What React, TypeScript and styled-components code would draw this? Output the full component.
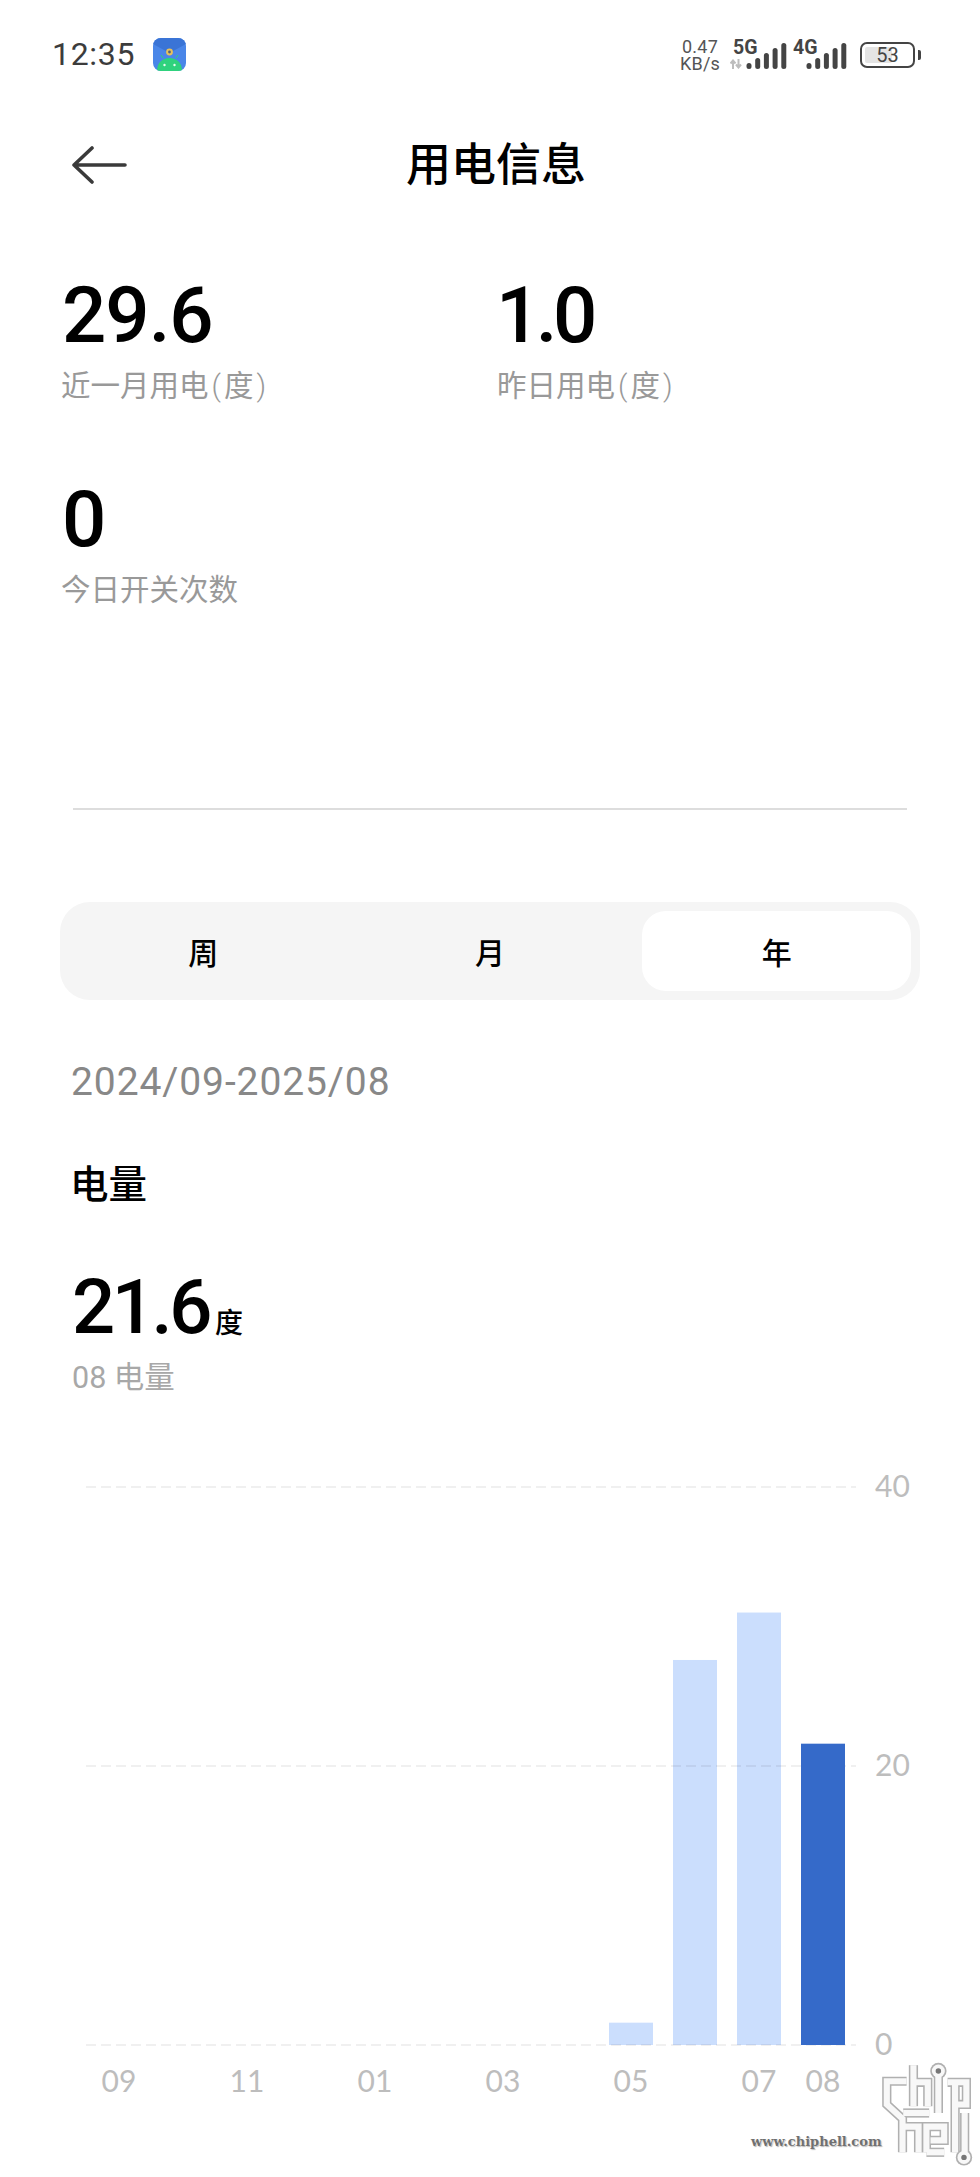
import styled, { createGlobalStyle } from 'styled-components'

const SANS = `Roboto, "Noto Sans CJK SC", sans-serif`

const chart = {
  top: 1450, // page y of the svg, the plot below uses page coordinates
  zero: 2045,
  unit: 13.95,
  firstX: 119,
  step: 64,
  barW: 44,
}

// one value per month, 09 to 08
const usage = [0, 0, 0, 0, 0, 0, 0, 0, 1.6, 27.6, 31, 21.6]
const months = ['09', '', '11', '', '01', '', '03', '', '05', '', '07', '08']
const ticks = [0, 20, 40]

const signalBars = [6, 11, 16, 21, 26]

function App() {
  return (
    <Page>
      <GlobalStyle />
      <StatusBar>
        <Clock>12:35</Clock>
        <AppIcon />
        <StatusRight>
          <NetSpeed>
            <span>0.47</span>
            <span>KB/s</span>
          </NetSpeed>
          <Signal label="5G" activity />
          <Signal label="4G" />
          <Battery />
        </StatusRight>
      </StatusBar>

      <TitleBar>
        <BackArrow />
        <Title>用电信息</Title>
      </TitleBar>

      <Stats>
        <Stat>
          <StatValue>29.6</StatValue>
          <StatLabel>近一月用电<Paren>(</Paren>度<Paren>)</Paren></StatLabel>
        </Stat>
        <Stat>
          <StatValue $tight>1.0</StatValue>
          <StatLabel>昨日用电<Paren>(</Paren>度<Paren>)</Paren></StatLabel>
        </Stat>
        <Stat>
          <StatValue>0</StatValue>
          <StatLabel>今日开关次数</StatLabel>
        </Stat>
      </Stats>

      <Divider />

      <Segments>
        <Segment>周</Segment>
        <Segment>月</Segment>
        <Segment $active>年</Segment>
      </Segments>

      <Range>2024/09-2025/08</Range>
      <SectionTitle>电量</SectionTitle>
      <Total>
        <TotalValue>21.6</TotalValue>
        <TotalUnit>度</TotalUnit>
      </Total>
      <TotalLabel>08 电量</TotalLabel>

      <UsageChart />

      <Watermark>
        <WatermarkUrl>www.chiphell.com</WatermarkUrl>
        <ChipHellLogo />
      </Watermark>
    </Page>
  )
}

export default App

// ------------------ DRAWINGS ------------------

function AppIcon() {
  return (
    <IconSvg viewBox="0 0 33 33">
      <defs>
        <clipPath id="icon-clip">
          <rect width="33" height="33" rx="8" />
        </clipPath>
      </defs>
      <g clipPath="url(#icon-clip)">
        <rect width="33" height="33" fill="#4a86e8" />
        <path d="M0 0H33V6L16.5 15L0 6Z" fill="#3a74d6" />
        <path d="M4 33C4 25 9 20 16.5 20S29 25 29 33Z" fill="#2fd27d" />
        <path d="M10 20L8 17M23 20L25 17" stroke="#2fd27d" strokeWidth="1" />
        <circle cx="16.5" cy="14" r="3.4" fill="#e8c25a" />
        <circle cx="16.5" cy="14" r="1.4" fill="#55617a" />
        <circle cx="11.5" cy="27" r="1.2" fill="#e9fbf1" />
        <circle cx="21.5" cy="27" r="1.2" fill="#e9fbf1" />
      </g>
    </IconSvg>
  )
}

function Signal({ label, activity }: { label: string; activity?: boolean }) {
  return (
    <SignalBox>
      <SignalName>{label}</SignalName>
      {activity && (
        <ActivitySvg viewBox="0 0 12 10">
          <path d="M3 10V2M0.5 4.5L3 1.5L5.5 4.5" stroke="#bdbdbd" strokeWidth="2" fill="none" />
          <path d="M8.5 0V8M6 5.5L8.5 8.5L11 5.5" stroke="#bdbdbd" strokeWidth="2" fill="none" />
        </ActivitySvg>
      )}
      <BarsSvg viewBox="0 0 41 26">
        {signalBars.map((h, i) => (
          <line
            key={h}
            x1={3 + i * 8.7}
            x2={3 + i * 8.7}
            y1={23.5}
            y2={26 - h + 2.5}
            stroke="#444"
            strokeWidth="5"
            strokeLinecap="round"
          />
        ))}
      </BarsSvg>
    </SignalBox>
  )
}

function Battery() {
  return (
    <BatteryBox>
      <BatteryBody>
        <BatteryFill />
        <BatteryText>53</BatteryText>
      </BatteryBody>
      <BatteryNub />
    </BatteryBox>
  )
}

function BackArrow() {
  return (
    <ArrowSvg viewBox="0 0 56 38">
      <path
        d="M54 19H3M21 2L3 19L21 36"
        stroke="#3a3a3a"
        strokeWidth="3.6"
        strokeLinecap="round"
        strokeLinejoin="round"
        fill="none"
      />
    </ArrowSvg>
  )
}

function UsageChart() {
  const yOf = (v: number) => chart.zero - v * chart.unit
  const xOf = (i: number) => chart.firstX + i * chart.step
  const lastIndex = usage.length - 1

  const bar = (v: number, i: number) => (
    <rect
      key={i}
      x={xOf(i) - chart.barW / 2}
      y={yOf(v)}
      width={chart.barW}
      height={v * chart.unit}
      fill={i === lastIndex ? '#356ac9' : '#cbdefd'}
    />
  )

  return (
    <ChartSvg viewBox={`0 ${chart.top} 980 660`}>
      {usage.map((v, i) => (i === lastIndex ? null : bar(v, i)))}
      {ticks.map((t) => (
        <g key={t}>
          <line
            x1="86"
            x2="856"
            y1={yOf(t)}
            y2={yOf(t)}
            stroke="#000"
            strokeOpacity="0.06"
            strokeWidth="2"
            strokeDasharray="10 5"
          />
          <ChartText x="875" y={yOf(t) + 10}>{t}</ChartText>
        </g>
      ))}
      {bar(usage[lastIndex], lastIndex)}
      {months.map((m, i) =>
        m ? (
          <ChartText key={m} x={xOf(i)} y="2092" textAnchor="middle">
            {m}
          </ChartText>
        ) : null,
      )}
    </ChartSvg>
  )
}

// circuit-board style logo, drawn twice: a grey outline and a white core
const logoStrokes = [
  'M490 122H432V190L478 232V330',
  'M478 255H525V330',
  'M510 75V195',
  'M510 125H552V195',
  'M480 215H556',
  'M583 106V215',
  'M610 125H665V190H632',
  'M632 125V330',
  'M548 330V255H600V295H560',
  'M548 330H600',
  'M660 215V330',
]
const logoDots: [number, number, number][] = [
  [583, 92, 14],
  [658, 345, 14],
]

function ChipHellLogo() {
  return (
    <LogoSvg viewBox="415 60 287 310">
      <g fill="none" strokeLinejoin="miter">
        {logoStrokes.map((d) => (
          <path key={d} d={d} stroke="#b0b0b0" strokeWidth="27" />
        ))}
        {logoDots.map(([x, y, r]) => (
          <circle key={x} cx={x} cy={y} r={r + 10} fill="#b0b0b0" />
        ))}
        {logoStrokes.map((d) => (
          <path key={d} d={d} stroke="#f8f8f8" strokeWidth="18" />
        ))}
        {logoDots.map(([x, y, r]) => (
          <g key={x}>
            <circle cx={x} cy={y} r={r + 5} fill="#f8f8f8" />
            <circle cx={x} cy={y} r={r - 6} fill="#777" />
          </g>
        ))}
      </g>
    </LogoSvg>
  )
}

// ------------------ STYLING ------------------

const GlobalStyle = createGlobalStyle`
  html, body {
    margin: 0;
    padding: 0;
    background: #fff;
  }
`

const Page = styled.div`
  position: relative;
  width: 980px;
  height: 2177px;
  overflow: hidden;
  background: #fff;
  font-family: ${SANS};
  color: #000;
`

const StatusBar = styled.div`
  display: flex;
  align-items: center;
  height: 33px;
  padding: 38px 59px 0 52px;
`

const Clock = styled.div`
  width: 83px;
  font-size: 32px;
  line-height: 33px;
  letter-spacing: 0.7px;
  color: #3c3c3c;
`

const IconSvg = styled.svg`
  width: 33px;
  height: 33px;
  margin-left: 18px;
`

const StatusRight = styled.div`
  display: flex;
  align-items: center;
  margin-left: auto;
  color: #444;
`

const NetSpeed = styled.div`
  display: flex;
  flex-direction: column;
  align-items: center;
  width: 38px;
  font-size: 18px;
  line-height: 17px;
  letter-spacing: 0.2px;
  color: #555;
`

const SignalBox = styled.div`
  position: relative;
  width: 54px;
  height: 30px;
  margin-left: 14px;

  & + & {
    margin-left: 6px;
  }
`

const SignalName = styled.div`
  position: absolute;
  left: 0;
  top: -1px;
  font-size: 19.5px;
  line-height: 17px;
  font-weight: 700;
  color: #444;
`

const ActivitySvg = styled.svg`
  position: absolute;
  left: -3px;
  top: 19px;
  width: 12px;
  height: 10px;
`

const BarsSvg = styled.svg`
  position: absolute;
  left: 13px;
  top: 3px;
  width: 41px;
  height: 26px;
`

const BatteryBox = styled.div`
  display: flex;
  align-items: center;
  margin-left: 13px;
`

const BatteryBody = styled.div`
  position: relative;
  display: flex;
  align-items: center;
  justify-content: center;
  box-sizing: border-box;
  width: 55px;
  height: 26px;
  border: 2.5px solid #444;
  border-radius: 7px;
`

const BatteryFill = styled.div`
  position: absolute;
  left: 3px;
  top: 3px;
  bottom: 3px;
  width: 53%;
  border-radius: 2px;
  background: #e4e4e4;
`

const BatteryText = styled.span`
  position: relative;
  font-size: 20px;
  line-height: 20px;
  color: #444;
`

const BatteryNub = styled.div`
  width: 3px;
  height: 10px;
  margin-left: 3px;
  border-radius: 0 2px 2px 0;
  background: #444;
`

const TitleBar = styled.div`
  display: flex;
  align-items: center;
  height: 80px;
  margin-top: 55px;
  padding-left: 71px;
`

const ArrowSvg = styled.svg`
  width: 56px;
  height: 38px;
  margin-top: -2px;
`

const Title = styled.h1`
  margin: 0 0 0 279px;
  font-size: 45px;
  line-height: 60px;
  font-weight: 500;
  color: #000;
`

const Stats = styled.div`
  display: grid;
  grid-template-columns: 436px 1fr;
  row-gap: 74px;
  margin-top: 70px;
  padding-left: 61px;
`

const Stat = styled.div`
  display: flex;
  flex-direction: column;
`

const StatValue = styled.div<{ $tight?: boolean }>`
  height: 80px;
  font-size: 78px;
  line-height: 80px;
  font-weight: 500;
  letter-spacing: ${(p) => (p.$tight ? '-4.5px' : '-1px')};
  margin-left: ${(p) => (p.$tight ? '-1px' : '1px')};
`

const StatLabel = styled.div`
  height: 43px;
  margin-top: 7px;
  font-size: 29.5px;
  line-height: 40px;
  color: #999;
  font-family: "Noto Sans CJK SC", sans-serif;
  font-weight: 400;
`

const Paren = styled.span`
  margin: 0 3px;
  font-family: Roboto, sans-serif;
  font-weight: 300;
`

const Divider = styled.div`
  height: 2px;
  margin: 198px 73px 0;
  background: #ddd;
`

const Segments = styled.div`
  display: grid;
  grid-template-columns: repeat(3, 1fr);
  height: 98px;
  margin: 92px 60px 0;
  padding: 9px 0;
  box-sizing: border-box;
  border-radius: 30px;
  background: #f5f5f5;
`

const Segment = styled.div<{ $active?: boolean }>`
  display: flex;
  align-items: center;
  justify-content: center;
  margin: 0 9px;
  padding-bottom: 1px;
  border-radius: 24px;
  font-size: 30px;
  font-weight: 500;
  background: ${(p) => (p.$active ? '#fff' : 'transparent')};
`

const Range = styled.div`
  margin: 57px 0 0 71px;
  font-size: 39px;
  line-height: 50px;
  letter-spacing: 0.9px;
  color: #888;
`

const SectionTitle = styled.div`
  margin: 53px 0 0 70px;
  font-size: 38.5px;
  line-height: 50px;
  font-weight: 500;
`

const Total = styled.div`
  display: flex;
  align-items: flex-end;
  height: 80px;
  margin: 57px 0 0 72px;
`

const TotalValue = styled.span`
  font-size: 76px;
  line-height: 80px;
  font-weight: 500;
  letter-spacing: -3.4px;
`

const TotalUnit = styled.span`
  margin: 0 0 3px 6px;
  font-size: 28px;
  line-height: 40px;
  font-weight: 500;
`

const TotalLabel = styled.div`
  margin: 11px 0 0 72px;
  font-size: 30.5px;
  line-height: 40px;
  color: #a8a8a8;
`

const ChartSvg = styled.svg`
  display: block;
  width: 980px;
  height: 660px;
  margin-top: 52px;
`

const ChartText = styled.text`
  font-family: Lato, sans-serif;
  font-size: 30px;
  fill: #bdbdbd;
`

const Watermark = styled.div`
  position: absolute;
  left: 751px;
  top: 2060px;
  width: 229px;
  height: 117px;
`

const WatermarkUrl = styled.div`
  position: absolute;
  left: 0;
  top: 72px;
  font-family: "DejaVu Serif", serif;
  font-size: 13px;
  line-height: 20px;
  font-weight: 700;
  color: #707070;
  white-space: nowrap;
  text-shadow: 0 0 2px #fff, 1px 1px 1px #aaa;
`

const LogoSvg = styled.svg`
  position: absolute;
  left: 130px;
  top: 0;
  width: 98px;
  height: 106px;
`
